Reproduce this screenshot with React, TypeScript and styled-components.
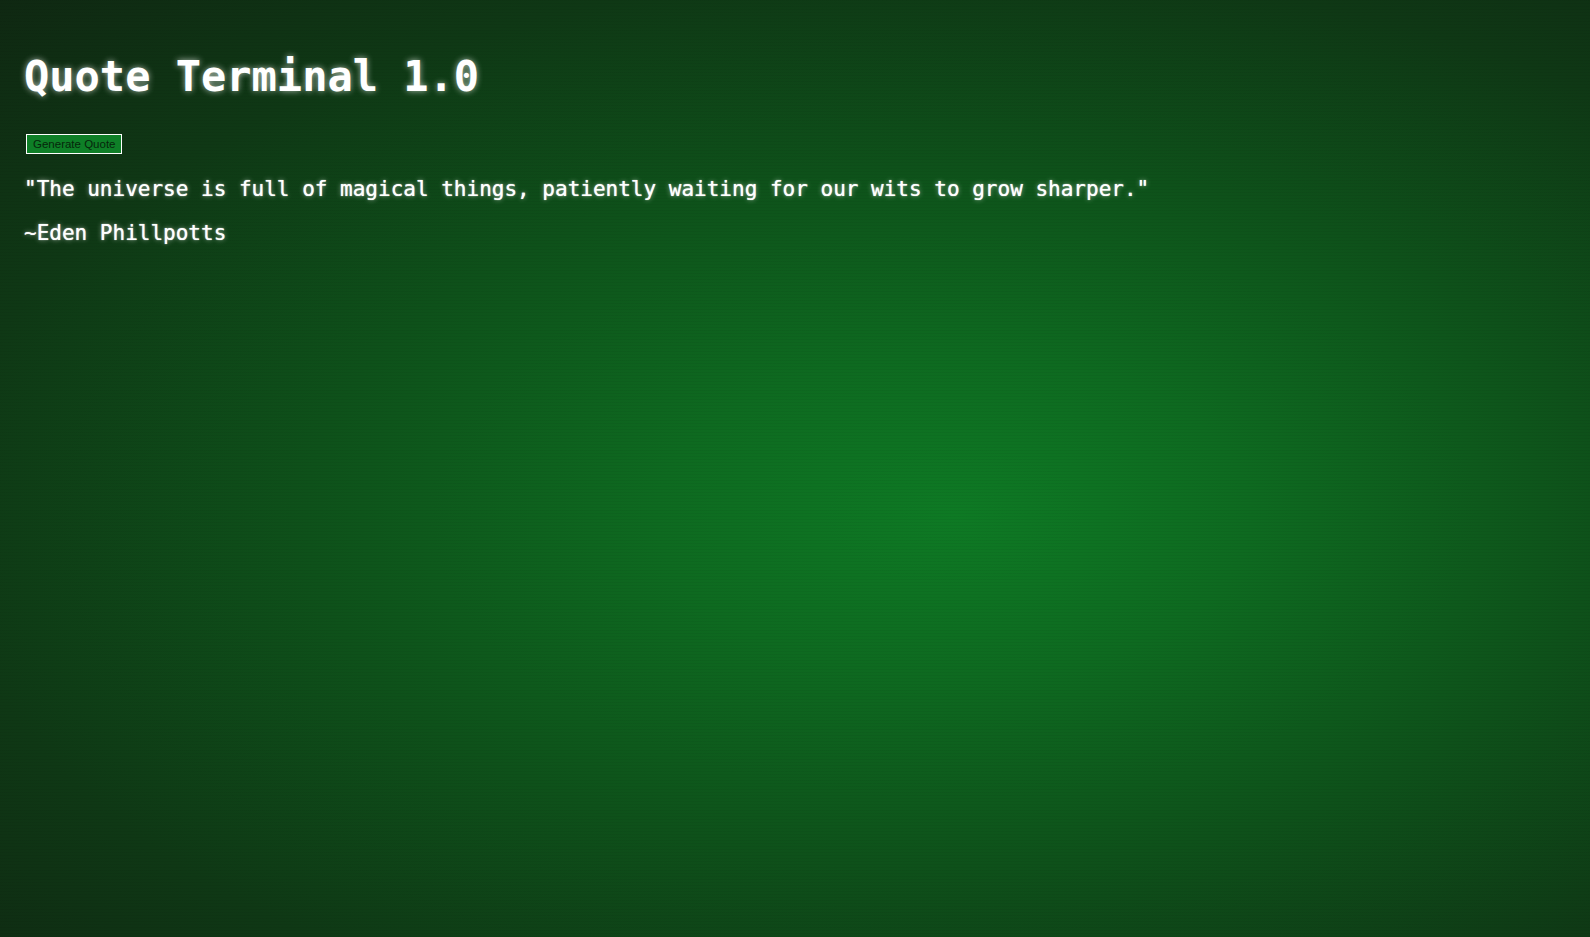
import React from "react";
import styled, { createGlobalStyle } from "styled-components";

const GlobalStyle = createGlobalStyle`
  html, body {
    margin: 0;
    padding: 0;
    height: 100%;
  }
  body {
    font-family: "DejaVu Sans Mono", "Liberation Mono", monospace;
    background: #0f2a12;
  }
`;

const Screen = styled.main`
  box-sizing: border-box;
  width: 100vw;
  height: 100vh;
  overflow: hidden;
  padding: 52px 24px 0;
  display: flex;
  flex-direction: column;
  align-items: flex-start;
  background:
    repeating-linear-gradient(
      0deg,
      rgba(0, 0, 0, 0.04) 0px,
      rgba(0, 0, 0, 0.04) 1px,
      transparent 1px,
      transparent 3px
    ),
    radial-gradient(
      ellipse farthest-corner at 60% 55%,
      #0e7a24 0%,
      #0e6a20 22%,
      #0e511a 48%,
      #0f3815 75%,
      #0f2812 100%
    );
`;

const Title = styled.h1`
  margin: 0;
  font-family: "DejaVu Sans Mono", monospace;
  font-weight: 700;
  font-size: 42px;
  line-height: 50px;
  color: #ffffff;
  text-shadow: 0 0 6px rgba(255, 255, 255, 0.65);
`;

const GenerateButton = styled.button`
  margin: 32px 0 0 2px;
  box-sizing: border-box;
  height: 20px;
  padding: 0 6px;
  border: 1px solid #ffffff;
  border-radius: 0;
  background: #0e7f27;
  color: #06260b;
  font-family: "Liberation Sans", Arial, sans-serif;
  font-size: 11.5px;
  line-height: 18px;
  cursor: pointer;
`;

const Line = styled.p<{ $gap: number }>`
  margin: ${(p) => p.$gap}px 0 0;
  font-family: "DejaVu Sans Mono", monospace;
  font-weight: 400;
  font-size: 21px;
  line-height: 26px;
  color: #ffffff;
  white-space: nowrap;
  text-shadow: 0 0 1px rgba(255, 255, 255, 0.9), 0 0 5px rgba(255, 255, 255, 0.55);
`;

export default function App() {
  return (
    <>
      <GlobalStyle />
      <Screen>
        <Title>Quote Terminal 1.0</Title>
        <GenerateButton type="button">Generate Quote</GenerateButton>
        <Line $gap={22}>
          "The universe is full of magical things, patiently waiting for our wits to grow sharper."
        </Line>
        <Line $gap={18}>~Eden Phillpotts</Line>
      </Screen>
    </>
  );
}
